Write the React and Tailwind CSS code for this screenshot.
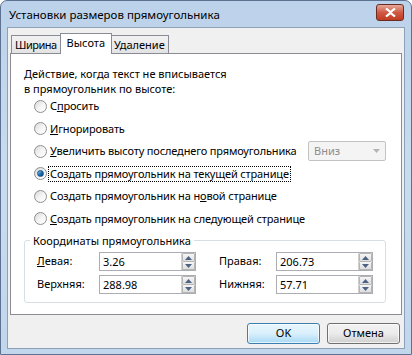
import React from "react";

const font = { fontFamily: '"Noto Sans", "Liberation Sans", sans-serif' };

function Radio({ checked }) {
  return (
    <span className="relative inline-block w-[13px] h-[13px] rounded-full border border-[#8e8f8f] bg-gradient-to-br from-[#d8d8d8] via-[#f4f4f4] to-white shrink-0">
      {checked && (
        <span className="absolute left-[2px] top-[2px] w-[7px] h-[7px] rounded-full bg-gradient-to-br from-[#8fd0f5] via-[#1f73b6] to-[#0a3e78] border border-[#1b4f86]" />
      )}
    </span>
  );
}

function RadioRow({ label, u, checked, focus, children }) {
  let content;
  if (u >= 0) {
    content = (
      <>
        {label.slice(0, u)}
        <span className="underline">{label[u]}</span>
        {label.slice(u + 1)}
      </>
    );
  } else {
    content = label;
  }
  return (
    <div className="flex items-center h-[22.5px] whitespace-nowrap">
      <Radio checked={checked} />
      <span className={"ml-[2px] px-[1px] leading-[14px] tracking-[-0.15px] " + (focus ? "outline outline-1 outline-dotted outline-black" : "")}>
        {content}
      </span>
      {children}
    </div>
  );
}

function Spin({ value, className }) {
  return (
    <div className={"flex h-[19px] border border-[#abadb3] bg-white " + className}>
      <div className="flex-1 pl-[3px] leading-[17px]">{value}</div>
      <div className="w-[14px] flex flex-col border-l border-[#d0d0d0]">
        <div className="flex-1 flex items-center justify-center bg-gradient-to-b from-[#f6f6f6] to-[#dedede] border border-[#b5b5b5] rounded-[1px]">
          <svg width="7" height="4" viewBox="0 0 7 4"><path d="M0 4 L3.5 0 L7 4Z" fill="#4d6185" /></svg>
        </div>
        <div className="flex-1 flex items-center justify-center bg-gradient-to-b from-[#f6f6f6] to-[#dedede] border border-t-0 border-[#b5b5b5] rounded-[1px]">
          <svg width="7" height="4" viewBox="0 0 7 4"><path d="M0 0 L3.5 4 L7 0Z" fill="#4d6185" /></svg>
        </div>
      </div>
    </div>
  );
}

export default function App() {
  return (
    <div
      className="w-[412px] h-[355px] flex flex-col rounded-t-[7px] border border-[#5d7290] bg-gradient-to-b from-[#bcd2ea] via-[#c9dcef] to-[#c2d6ec] text-[11px] text-black"
      style={font}
    >
      <div className="h-[26px] flex items-center justify-between pl-[8px] pr-[7px] shrink-0">
        <span className="text-[11.5px] text-black mt-[2px]">Установки размеров прямоугольника</span>
        <div className="w-[28px] h-[17px] mt-[-3px] rounded-[3px] border border-[#6b2b20] bg-gradient-to-b from-[#e5a89a] via-[#cf5a43] to-[#c13a22] flex items-center justify-center">
          <svg width="11" height="9" viewBox="0 0 11 9">
            <path d="M1 0.5 L5.5 4 L10 0.5 M1 8.5 L5.5 5 L10 8.5" stroke="white" strokeWidth="2.2" fill="none" />
          </svg>
        </div>
      </div>
      <div className="flex-1 mx-[6px] mb-[5px] border border-[#8ba0b9] bg-[#f0f0f0] flex flex-col pt-[4px] px-[2px]">
        <div className="flex items-end h-[21px] pl-[1px]">
          <div className="h-[18px] px-[3px] tracking-[-0.5px] border border-b-0 border-[#898c95] bg-gradient-to-b from-[#f2f2f2] to-[#e3e3e3] leading-[17px]">Ширина</div>
          <div className="h-[21px] px-[6px] border border-b-0 border-[#898c95] bg-white leading-[18px] relative top-[1px] z-10 -mx-[1px]">Высота</div>
          <div className="h-[18px] px-[3px] border border-b-0 border-l-0 border-[#898c95] bg-gradient-to-b from-[#f2f2f2] to-[#e3e3e3] leading-[17px]">Удаление</div>
        </div>
        <div className="h-[262px] border border-[#898c95] bg-white pl-[13px] pr-[15px] pt-[12px] flex flex-col">
          <div className="leading-[15px]">
            Действие, когда текст не вписывается
            <br />в прямоугольник по высоте:
          </div>
          <div className="pl-[10px] -mt-[1px]">
            <RadioRow label="Спросить" u={1} />
            <RadioRow label="Игнорировать" u={0} />
            <RadioRow label="Увеличить высоту последнего прямоугольника" u={0}>
              <div className="ml-auto w-[78px] h-[20px] border border-[#c3c3c3] rounded-[2px] bg-[#f4f4f4] flex items-center justify-between pl-[5px] pr-[5px] text-[#8d8d8d]">
                <span>Вниз</span>
                <svg width="7" height="4" viewBox="0 0 7 4"><path d="M0 0 L3.5 4 L7 0Z" fill="#b4b4b4" /></svg>
              </div>
            </RadioRow>
            <RadioRow label="Создать прямоугольник на текущей странице" u={-1} checked focus />
            <RadioRow label="Создать прямоугольник на новой странице" u={26} />
            <RadioRow label="Создать прямоугольник на следующей странице" u={0} />
          </div>
          <div className="mt-[10px] h-[63px] border border-[#d5dfe5] rounded-[3px] relative flex flex-col pt-[9px] pl-[12px]">
            <span className="absolute left-[5px] top-[-8px] bg-white px-[3px] leading-[15px]">Координаты прямоугольника</span>
            <div className="flex items-center h-[23px]">
              <span className="w-[62px]"><span className="underline">Л</span>евая:</span>
              <Spin value="3.26" className="w-[97px]" />
              <span className="ml-[23px] w-[57px]">Правая:</span>
              <Spin value="206.73" className="w-[97px]" />
            </div>
            <div className="flex items-center h-[23px]">
              <span className="w-[62px]">Верхняя:</span>
              <Spin value="288.98" className="w-[97px]" />
              <span className="ml-[23px] w-[57px]">Нижняя:</span>
              <Spin value="57.71" className="w-[97px]" />
            </div>
          </div>
        </div>
        <div className="flex justify-end gap-[7px] mt-[8px] pr-[2px]">
          <div className="w-[73px] h-[21px] rounded-[3px] border border-[#3c7fb1] bg-gradient-to-b from-[#eaf6fd] via-[#d9f0fc] to-[#a7d9f5] flex items-center justify-center shadow-[inset_0_0_0_1px_rgba(255,255,255,0.7)]">OK</div>
          <div className="w-[73px] h-[21px] rounded-[3px] border border-[#707070] bg-gradient-to-b from-[#f2f2f2] via-[#ebebeb] to-[#cfcfcf] flex items-center justify-center shadow-[inset_0_0_0_1px_rgba(255,255,255,0.7)]">Отмена</div>
        </div>
      </div>
    </div>
  );
}
